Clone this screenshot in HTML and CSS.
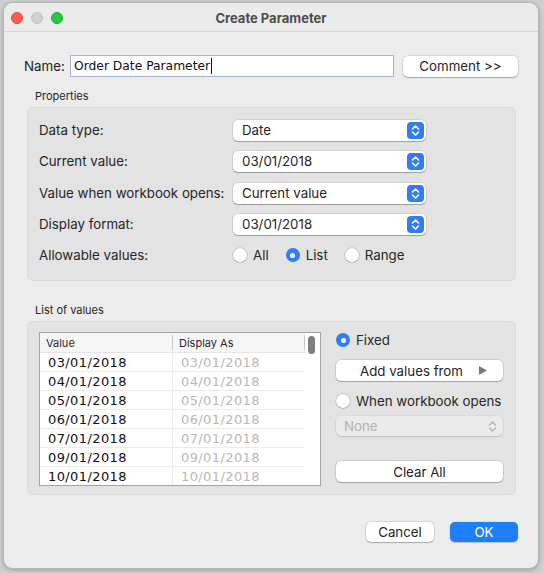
FILE: index.html
```html
<!DOCTYPE html>
<html>
<head>
<meta charset="utf-8">
<link rel="stylesheet" href="styles.css">
</head>
<body>
<div class="window">
  <div class="titlebar">
    <div class="lights">
      <span class="light red"></span>
      <span class="light grey"></span>
      <span class="light green"></span>
    </div>
    <div class="title">Create Parameter</div>
    <div></div>
  </div>
  <div class="content">
    <div class="name-row">
      <span class="name-label">Name:</span>
      <div class="textfield">Order Date Parameter<span class="caret"></span></div>
      <div class="btn comment">Comment &gt;&gt;</div>
    </div>

    <div class="section-label">Properties</div>
    <div class="group props">
      <div class="prop-row">
        <span class="prop-label">Data type:</span>
        <div class="select"><span>Date</span><span class="stepper"><svg width="9" height="13" viewBox="0 0 9 13"><path d="M1.5 5 L4.5 2 L7.5 5 M1.5 8 L4.5 11 L7.5 8" fill="none" stroke="#fff" stroke-width="1.6" stroke-linecap="round" stroke-linejoin="round"/></svg></span></div>
      </div>
      <div class="prop-row">
        <span class="prop-label">Current value:</span>
        <div class="select"><span>03/01/2018</span><span class="stepper"><svg width="9" height="13" viewBox="0 0 9 13"><path d="M1.5 5 L4.5 2 L7.5 5 M1.5 8 L4.5 11 L7.5 8" fill="none" stroke="#fff" stroke-width="1.6" stroke-linecap="round" stroke-linejoin="round"/></svg></span></div>
      </div>
      <div class="prop-row row3">
        <span class="prop-label">Value when workbook opens:</span>
        <div class="select"><span>Current value</span><span class="stepper"><svg width="9" height="13" viewBox="0 0 9 13"><path d="M1.5 5 L4.5 2 L7.5 5 M1.5 8 L4.5 11 L7.5 8" fill="none" stroke="#fff" stroke-width="1.6" stroke-linecap="round" stroke-linejoin="round"/></svg></span></div>
      </div>
      <div class="prop-row">
        <span class="prop-label">Display format:</span>
        <div class="select"><span>03/01/2018</span><span class="stepper"><svg width="9" height="13" viewBox="0 0 9 13"><path d="M1.5 5 L4.5 2 L7.5 5 M1.5 8 L4.5 11 L7.5 8" fill="none" stroke="#fff" stroke-width="1.6" stroke-linecap="round" stroke-linejoin="round"/></svg></span></div>
      </div>
      <div class="prop-row">
        <span class="prop-label">Allowable values:</span>
        <div class="radios">
          <span class="radio-item"><span class="radio"></span>All</span>
          <span class="radio-item"><span class="radio on"></span>List</span>
          <span class="radio-item"><span class="radio"></span>Range</span>
        </div>
      </div>
    </div>

    <div class="section-label list-label">List of values</div>
    <div class="group list">
      <div class="table">
        <div class="table-main">
          <div class="thead">
            <div class="th col-value">Value</div>
            <div class="th col-display">Display As</div>
          </div>
          <div class="tbody">
            <div class="tr"><div class="td col-value">03/01/2018</div><div class="td col-display dim">03/01/2018</div></div>
            <div class="tr"><div class="td col-value">04/01/2018</div><div class="td col-display dim">04/01/2018</div></div>
            <div class="tr"><div class="td col-value">05/01/2018</div><div class="td col-display dim">05/01/2018</div></div>
            <div class="tr"><div class="td col-value">06/01/2018</div><div class="td col-display dim">06/01/2018</div></div>
            <div class="tr"><div class="td col-value">07/01/2018</div><div class="td col-display dim">07/01/2018</div></div>
            <div class="tr"><div class="td col-value">09/01/2018</div><div class="td col-display dim">09/01/2018</div></div>
            <div class="tr"><div class="td col-value">10/01/2018</div><div class="td col-display dim">10/01/2018</div></div>
          </div>
        </div>
        <div class="scrollbar"><div class="thumb"></div></div>
      </div>
      <div class="side">
        <div class="side-radio fixed"><span class="radio on"></span>Fixed</div>
        <div class="btn wide add"><span>Add values from</span><svg class="tri" width="8" height="9" viewBox="0 0 8 9"><path d="M0 0 L8 4.5 L0 9 Z" fill="#7a7a7a"/></svg></div>
        <div class="side-radio when"><span class="radio"></span>When workbook opens</div>
        <div class="select disabled"><span>None</span><span class="stepper off"><svg width="9" height="13" viewBox="0 0 9 13"><path d="M1.5 5 L4.5 2 L7.5 5 M1.5 8 L4.5 11 L7.5 8" fill="none" stroke="#b0b0b0" stroke-width="1.3" stroke-linecap="round" stroke-linejoin="round"/></svg></span></div>
        <div class="btn wide clear">Clear All</div>
      </div>
    </div>

    <div class="footer">
      <div class="btn cancel">Cancel</div>
      <div class="btn ok">OK</div>
    </div>
  </div>
</div>
</body>
</html>
```

FILE: styles.css
```css
* { box-sizing: border-box; }
html, body { margin: 0; padding: 0; }
body {
  background: #cfcfcf;
  width: 544px;
  height: 573px;
  overflow: hidden;
  font-family: "Inter", "Liberation Sans", sans-serif;
  font-size: 13.3px;
  color: #262626;
}
.window {
  margin: 2px 0 0 3px;
  width: 536px;
  height: 567px;
  background: #ececec;
  border: 1px solid #b9b9b9;
  border-radius: 10px;
  box-shadow: 0 1px 4px rgba(0,0,0,0.25);
  overflow: hidden;
}
.titlebar {
  height: 29px;
  border-bottom: 1px solid #d4d4d4;
  display: grid;
  grid-template-columns: 1fr auto 1fr;
  align-items: center;
  background: #ebebeb;
}
.lights { display: flex; gap: 8px; padding-left: 7px; padding-top: 1px; }
.light { width: 12px; height: 12px; border-radius: 50%; display: block; }
.light.red { background: #fd5f57; border: 0.5px solid #e0443e; }
.light.grey { background: #d0d0d0; border: 0.5px solid #c0c0c0; }
.light.green { background: #28c840; border: 0.5px solid #1aab29; }
.title { font-weight: 700; font-size: 13px; color: #4d4d4d; padding-top: 1px; }

.content { padding: 23px 20px 0 20px; }

.name-row { display: flex; align-items: center; height: 22px; }
.name-label { width: 46px; color: #1e1e1e; }
.textfield {
  width: 324px;
  height: 22px;
  background: #fff;
  border: 1px solid #a9b5cf;
  font-family: "DejaVu Sans", sans-serif;
  font-size: 12.3px;
  color: #111;
  padding: 0 0 0 3px;
  display: flex;
  align-items: center;
}
.caret { display: inline-block; width: 1px; height: 16px; background: #111; margin-left: 1px; }
.btn {
  background: #fff;
  border-radius: 5px;
  box-shadow: 0 0 0 0.5px rgba(0,0,0,0.18), 0 1px 1px rgba(0,0,0,0.22);
  display: flex;
  align-items: center;
  justify-content: center;
  color: #262626;
}
.comment { margin-left: 9px; width: 115px; height: 21px; }

.section-label { font-size: 11px; margin: 12px 0 4px 11px; height: 14px; line-height: 14px; }
.list-label { margin-top: 22px; }

.group {
  margin-left: 3px;
  width: 489px;
  height: 174px;
  background: #e3e3e3;
  border: 1px solid #d9d9d9;
  border-radius: 6px;
}
.props { padding: 11px 0 0 11px; display: flex; flex-direction: column; gap: 9px; }
.prop-row { display: flex; align-items: center; height: 22px; }
.prop-row.row3 { margin-top: 1px; }
.prop-label { width: 194px; }
.select {
  width: 193px;
  height: 21px;
  background: #fff;
  border-radius: 5px;
  box-shadow: 0 0 0 0.5px rgba(0,0,0,0.15), 0 1px 1px rgba(0,0,0,0.25);
  display: flex;
  align-items: center;
  justify-content: space-between;
  padding: 0 2px 0 9px;
}
.stepper {
  width: 17px; height: 17px;
  background: #2f7ef6;
  border-radius: 4px;
  display: flex; align-items: center; justify-content: center;
}
.stepper.off { background: transparent; }
.select.disabled { width: 167px; height: 20px; background: #ebebeb; color: #b3b3b3; box-shadow: 0 0 0 0.5px rgba(0,0,0,0.08), 0 1px 1px rgba(0,0,0,0.12); padding-left: 8px; }

.radios { display: flex; align-items: center; }
.radio-item { display: flex; align-items: center; gap: 6px; margin-right: 17px; }
.radio {
  width: 14px; height: 14px; border-radius: 50%;
  background: #fff;
  box-shadow: 0 0 0 0.5px rgba(0,0,0,0.2), 0 0.5px 1px rgba(0,0,0,0.25);
  display: inline-flex; align-items: center; justify-content: center;
  flex: none;
}
.radio.on { background: #2f7ef6; box-shadow: none; }
.radio.on::after { content: ""; width: 5px; height: 5px; border-radius: 50%; background: #fff; }

.list { display: flex; padding: 10px 0 0 11px; }
.table {
  width: 282px; height: 154px;
  border: 1px solid #a3a3a3;
  background: #fff;
  display: flex;
  overflow: hidden;
}
.table-main { flex: 1; overflow: hidden; }
.thead { display: flex; height: 20px; background: #f6f6f6; border-bottom: 1px solid #e6e6e6; }
.th { font-size: 11px; display: flex; align-items: center; color: #2a2a2a; }
.thead .col-value { border-right: 1px solid #c9c9c9; padding-left: 6px; margin: 2px 0; }
.thead .col-display { padding-left: 6px; border-right: 1px solid #c9c9c9; margin: 2px 0; }
.col-value { width: 133px; }
.col-display { flex: 1; }
.tr { display: flex; height: 19px; border-bottom: 1px solid #ececec; }
.td { font-family: "DejaVu Sans", sans-serif; font-size: 13px; letter-spacing: 0.4px; color: #111; display: flex; align-items: center; }
.tbody .col-value { padding-left: 8px; border-right: 1px solid #ececec; }
.tbody .col-display { padding-left: 8px; }
.dim { color: #b8b8b8; }
.scrollbar { width: 15px; background: #fff; padding: 3px 0 0 3px; }
.thumb { width: 7px; height: 18px; border-radius: 4px; background: #7f7f7f; }

.side { margin-left: 15px; width: 167px; display: flex; flex-direction: column; }
.side-radio { display: flex; align-items: center; gap: 6px; height: 18px; }
.fixed { margin-top: -1px; }
.btn.wide { width: 167px; height: 21px; }
.add { margin-top: 11px; justify-content: flex-start; padding-left: 24px; }
.tri { margin-left: auto; margin-right: 16px; }
.when { margin-top: 11px; }
.select.disabled { margin-top: 6px; }
.clear { margin-top: 25px; }

.footer { display: flex; justify-content: flex-end; gap: 16px; margin-top: 27px; }
.cancel { width: 68px; height: 20px; }
.ok { width: 68px; height: 20px; background: #1f7ff7; color: #fff; box-shadow: 0 0 0 0.5px rgba(0,0,0,0.1), 0 1px 1px rgba(0,0,0,0.15); }
```
